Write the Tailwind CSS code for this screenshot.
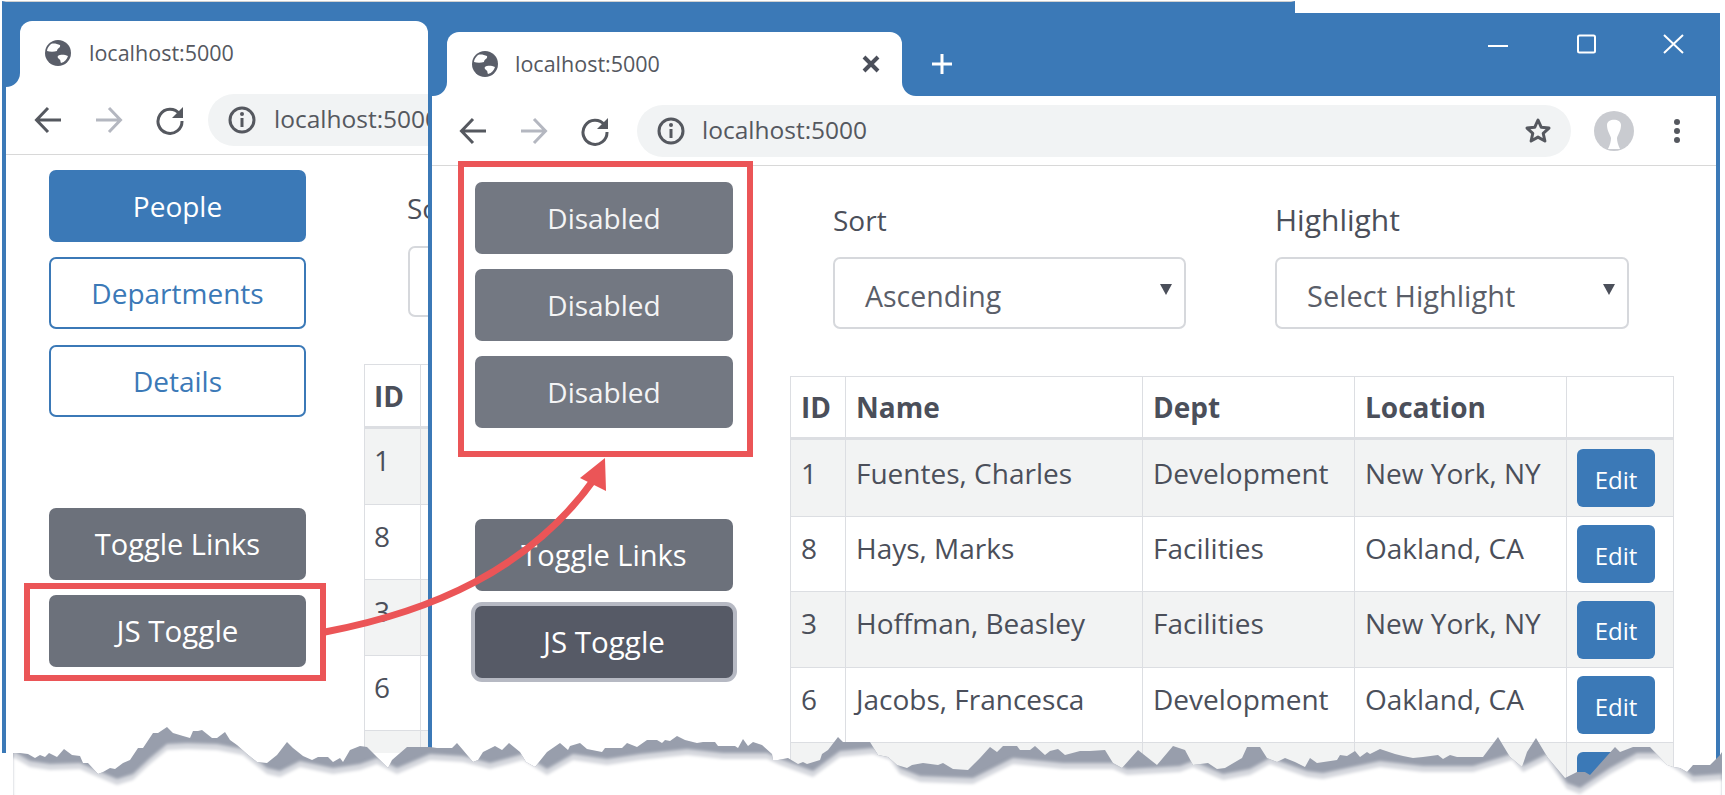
<!DOCTYPE html>
<html lang="en">
<head>
    <meta charset="UTF-8">
    <meta name="viewport" content="width=device-width, initial-scale=1.0">
    <title>localhost:5000</title>
    <script src="https://cdn.jsdelivr.net/npm/@tailwindcss/browser@4"></script>
</head>
<body class="bg-white">
<div class="relative w-[1725px] h-[795px] overflow-hidden bg-white font-['Open_Sans',sans-serif] text-[#4b4f5a]">

    <!-- Back window -->
    <div class="absolute left-[2px] top-[1px] w-[1293px] h-[752px] flex flex-col overflow-hidden border-t border-t-[#d0d0d0] border-x-4 border-x-[#3b79b7] bg-white">
        <div class="flex h-[85px] shrink-0 bg-white">
            <div class="w-[14px] bg-[#3b79b7] rounded-br-[14px]"></div>
            <div class="w-[408px] pt-[19px] bg-[#3b79b7]">
                <div class="h-[66px] bg-white rounded-t-[12px] flex items-center pl-[24px] pb-[2px] gap-[17px]">
                    <svg width="28" height="28" viewBox="0 0 28 28"><circle cx="14" cy="14" r="13" fill="#5a5e69"/><path d="M7 5c3-1 6 0 9 1 1 3-3 3-3 6-3 1-7 1-10 0 0-3 2-5 4-7zM14 17c3-2 7-1 10 0-1 3-3 6-7 7-1-2 0-3-2-4-1-1-2-2-1-3z" fill="#fff"/></svg>
                    <span class="text-[21.500px] text-[#55585f]">localhost:5000</span>
                </div>
            </div>
            <div class="flex-1 bg-[#3b79b7]"></div>
        </div>
        <div class="h-[68px] shrink-0 border-b border-[#d8d8d8] flex items-center pl-[28px] pb-[2px]">
            <svg width="28" height="28" viewBox="0 0 28 28" fill="none" stroke="#55585f" stroke-width="3"><path d="M27 14H3M14 2 2.500 14 14 26"/></svg>
            <svg class="ml-[33px]" width="28" height="28" viewBox="0 0 28 28" fill="none" stroke="#b4b7c0" stroke-width="3"><path d="M1 14h24M14 2l11.500 12L14 26"/></svg>
            <svg class="ml-[32px]" width="30" height="30" viewBox="0 0 30 30" fill="none"><path d="M24.500 9A12 12 0 1 0 27 16" stroke="#55585f" stroke-width="3"/><path d="M28 2v11H17z" fill="#55585f"/></svg>
            <div class="ml-[23px] flex-1 h-[52px] rounded-l-[26px] bg-[#f1f3f4] flex items-center pl-[20px] gap-[18px]">
                <svg width="28" height="28" viewBox="0 0 28 28" fill="none"><circle cx="14" cy="14" r="12" stroke="#55585f" stroke-width="3"/><path d="M14 12v9" stroke="#55585f" stroke-width="3"/><circle cx="14" cy="8" r="2" fill="#55585f"/></svg>
                <span class="text-[24.500px] text-[#55585f]">localhost:5000</span>
            </div>
        </div>
        <div class="flex flex-1 min-h-0">
            <div class="w-[358px] shrink-0 pl-[43px] pt-[15px] flex flex-col">
                <div class="w-[257px] h-[72px] rounded-[7px] bg-[#3b79b7] text-white text-[28px] flex items-center justify-center">People</div>
                <div class="w-[257px] h-[72px] mt-[15px] rounded-[7px] border-2 border-[#3b79b7] text-[#3b79b7] text-[28px] flex items-center justify-center">Departments</div>
                <div class="w-[257px] h-[72px] mt-[16px] rounded-[7px] border-2 border-[#3b79b7] text-[#3b79b7] text-[28px] flex items-center justify-center">Details</div>
                <div class="w-[257px] h-[72px] mt-[91px] rounded-[7px] bg-[#6c717b] text-white text-[29px] flex items-center justify-center">Toggle Links</div>
                <div class="w-[257px] h-[72px] mt-[15px] rounded-[7px] bg-[#6c717b] text-white text-[29.500px] flex items-center justify-center">JS Toggle</div>
            </div>
            <div class="flex-1">
                <div class="pl-[43px] pt-[32px] text-[28px] leading-[42px]">Sort</div>
                <div class="ml-[44px] mt-[17px] w-[353px] h-[71px] rounded-[7px] border-2 border-[#d6d8dc]"></div>
                <table class="mt-[47px] table-fixed border-collapse text-[28px] leading-[42px]">
                    <colgroup><col class="w-[56px]"><col class="w-[300px]"></colgroup>
                    <tr class="h-[63px]"><th class="border border-[#dcdee2] border-b-[3px] px-[9px] text-left align-middle">ID</th><th class="border border-[#dcdee2] border-b-[3px]"></th></tr>
                    <tr class="h-[77px] bg-[#f2f3f3]"><td class="border border-[#dcdee2] px-[9px] pt-[10px] align-top">1</td><td class="border border-[#dcdee2]"></td></tr>
                    <tr class="h-[75px]"><td class="border border-[#dcdee2] px-[9px] pt-[10px] align-top">8</td><td class="border border-[#dcdee2]"></td></tr>
                    <tr class="h-[76px] bg-[#f2f3f3]"><td class="border border-[#dcdee2] px-[9px] pt-[10px] align-top">3</td><td class="border border-[#dcdee2]"></td></tr>
                    <tr class="h-[75px]"><td class="border border-[#dcdee2] px-[9px] pt-[10px] align-top">6</td><td class="border border-[#dcdee2]"></td></tr>
                    <tr class="h-[75px] bg-[#f2f3f3]"><td class="border border-[#dcdee2] px-[9px] pt-[10px] align-top">2</td><td class="border border-[#dcdee2]"></td></tr>
                </table>
            </div>
        </div>
    </div>

    <!-- Front window -->
    <div class="absolute left-[428px] top-[13px] w-[1292px] h-[782px] flex flex-col overflow-hidden border-x-4 border-x-[#3b79b7] bg-white">
        <div class="flex h-[83px] shrink-0 bg-white">
            <div class="w-[15px] bg-[#3b79b7] rounded-br-[14px]"></div>
            <div class="w-[455px] pt-[19px] bg-[#3b79b7]">
                <div class="h-[64px] bg-white rounded-t-[12px] flex items-center pl-[24px] pr-[22px] gap-[16px]">
                    <svg width="28" height="28" viewBox="0 0 28 28"><circle cx="14" cy="14" r="13" fill="#5a5e69"/><path d="M7 5c3-1 6 0 9 1 1 3-3 3-3 6-3 1-7 1-10 0 0-3 2-5 4-7zM14 17c3-2 7-1 10 0-1 3-3 6-7 7-1-2 0-3-2-4-1-1-2-2-1-3z" fill="#fff"/></svg>
                    <span class="text-[21.500px] flex-1 text-[#55585f]">localhost:5000</span>
                    <svg width="18" height="18" viewBox="0 0 18 18" stroke="#4b4f5a" stroke-width="4"><path d="M2 2l14 14M16 2 2 16"/></svg>
                </div>
            </div>
            <div class="flex-1 rounded-bl-[14px] bg-[#3b79b7] flex items-start text-white pl-[29px] pt-[40px]">
                <svg width="22" height="22" viewBox="0 0 22 22" stroke="#fff" stroke-width="3"><path d="M11 1v20M1 11h20"/></svg>
                <svg class="ml-[534px] mt-[-9px]" width="22" height="4" viewBox="0 0 22 4" stroke="#fff" stroke-width="2"><path d="M1 2h20"/></svg>
                <svg class="ml-[67px] mt-[-19px]" width="21" height="20" viewBox="0 0 21 20" fill="none" stroke="#fff" stroke-width="2"><rect x="2" y="1.500" width="17" height="17" rx="1.500"/></svg>
                <svg class="ml-[66px] mt-[-19px]" width="21" height="20" viewBox="0 0 21 20" fill="none" stroke="#fff" stroke-width="2"><path d="M1 1l19 18M20 1 1 19"/></svg>
            </div>
        </div>
        <div class="h-[70px] shrink-0 border-b border-[#d8d8d8] flex items-center pl-[27px]">
            <svg width="28" height="28" viewBox="0 0 28 28" fill="none" stroke="#55585f" stroke-width="3"><path d="M27 14H3M14 2 2.500 14 14 26"/></svg>
            <svg class="ml-[33px]" width="28" height="28" viewBox="0 0 28 28" fill="none" stroke="#b4b7c0" stroke-width="3"><path d="M1 14h24M14 2l11.500 12L14 26"/></svg>
            <svg class="ml-[32px]" width="30" height="30" viewBox="0 0 30 30" fill="none"><path d="M24.500 9A12 12 0 1 0 27 16" stroke="#55585f" stroke-width="3"/><path d="M28 2v11H17z" fill="#55585f"/></svg>
            <div class="ml-[27px] w-[934px] h-[52px] rounded-[26px] bg-[#f1f3f4] flex items-center pl-[20px] pr-[19px] gap-[17px]">
                <svg width="28" height="28" viewBox="0 0 28 28" fill="none"><circle cx="14" cy="14" r="12" stroke="#55585f" stroke-width="3"/><path d="M14 12v9" stroke="#55585f" stroke-width="3"/><circle cx="14" cy="8" r="2" fill="#55585f"/></svg>
                <span class="text-[24.500px] flex-1 text-[#55585f]">localhost:5000</span>
                <svg width="28" height="27" viewBox="0 0 28 27" fill="none" stroke="#55585f" stroke-width="3" stroke-linejoin="round"><path d="M14 3l3.300 7.300 7.700.8-5.800 5.200 1.700 7.700L14 20.100 7.100 24l1.700-7.700L3 11.100l7.700-.8z"/></svg>
            </div>
            <svg class="ml-[23px]" width="40" height="40" viewBox="0 0 40 40"><circle cx="20" cy="20" r="20" fill="#c9cbd0"/><path d="M13 14c0-7 14-7 14 0 0 6-3 9-4 13 0 3 1 7 3 11H14c2-4 3-8 3-11-1-4-4-7-4-13z" fill="#fff"/></svg>
            <svg class="ml-[39px]" width="8" height="26" viewBox="0 0 8 26" fill="#55585f"><circle cx="4" cy="4" r="3"/><circle cx="4" cy="13" r="3"/><circle cx="4" cy="22" r="3"/></svg>
        </div>
        <div class="flex flex-1 min-h-0">
            <div class="w-[358px] shrink-0 pl-[43px] pt-[16px] flex flex-col">
                <div class="w-[258px] h-[72px] rounded-[7px] bg-[#737882] text-[#f4f4f5] text-[28px] flex items-center justify-center">Disabled</div>
                <div class="w-[258px] h-[72px] mt-[15px] rounded-[7px] bg-[#737882] text-[#f4f4f5] text-[28px] flex items-center justify-center">Disabled</div>
                <div class="w-[258px] h-[72px] mt-[15px] rounded-[7px] bg-[#737882] text-[#f4f4f5] text-[28px] flex items-center justify-center">Disabled</div>
                <div class="w-[258px] h-[72px] mt-[91px] rounded-[7px] bg-[#6c717b] text-white text-[29px] flex items-center justify-center">Toggle Links</div>
                <div class="w-[258px] h-[72px] mt-[15px] rounded-[7px] bg-[#565a66] text-white text-[29.500px] flex items-center justify-center ring-4 ring-[#b6b9c3]">JS Toggle</div>
            </div>
            <div class="flex-1">
                <div class="flex pl-[43px] pt-[33px] gap-[89px]">
                    <div class="w-[353px]">
                        <div class="text-[28px] leading-[42px]">Sort</div>
                        <div class="mt-[16px] h-[72px] rounded-[7px] border-2 border-[#d6d8dc] flex items-center justify-between pl-[30px] pr-[12px] pt-[6px] text-[28.500px] text-[#5a5e69]">Ascending
                            <svg class="mt-[-14px]" width="12" height="11" viewBox="0 0 12 11" fill="#4b4f5a"><path d="M0 0h12L6 11z"/></svg>
                        </div>
                    </div>
                    <div class="w-[354px]">
                        <div class="text-[30px] leading-[42px]">Highlight</div>
                        <div class="mt-[16px] h-[72px] rounded-[7px] border-2 border-[#d6d8dc] flex items-center justify-between pl-[30px] pr-[12px] pt-[6px] text-[29px] text-[#5a5e69]">Select Highlight
                            <svg class="mt-[-14px]" width="12" height="11" viewBox="0 0 12 11" fill="#4b4f5a"><path d="M0 0h12L6 11z"/></svg>
                        </div>
                    </div>
                </div>
                <table class="mt-[47px] w-[883px] table-fixed border-collapse text-[28px] leading-[42px]">
                    <colgroup><col class="w-[55px]"><col class="w-[297px]"><col class="w-[212px]"><col class="w-[212px]"><col class="w-[107px]"></colgroup>
                    <tr class="h-[62px]">
                        <th class="border border-[#dcdee2] border-b-[3px] px-[10px] text-left">ID</th>
                        <th class="border border-[#dcdee2] border-b-[3px] px-[10px] text-left">Name</th>
                        <th class="border border-[#dcdee2] border-b-[3px] px-[10px] text-left">Dept</th>
                        <th class="border border-[#dcdee2] border-b-[3px] px-[10px] text-left">Location</th>
                        <th class="border border-[#dcdee2] border-b-[3px]"></th>
                    </tr>
                    <tr class="h-[78px] bg-[#f2f3f3]">
                        <td class="border border-[#dcdee2] px-[10px] pt-[12px] align-top">1</td>
                        <td class="border border-[#dcdee2] px-[10px] pt-[12px] align-top">Fuentes, Charles</td>
                        <td class="border border-[#dcdee2] px-[10px] pt-[12px] align-top">Development</td>
                        <td class="border border-[#dcdee2] px-[10px] pt-[12px] align-top">New York, NY</td>
                        <td class="border border-[#dcdee2] pl-[10px] align-middle"><div class="w-[78px] h-[58px] pt-[3px] rounded-[6px] bg-[#3b79b7] text-white text-[24px] flex items-center justify-center">Edit</div></td>
                    </tr>
                    <tr class="h-[75px]">
                        <td class="border border-[#dcdee2] px-[10px] pt-[10px] align-top">8</td>
                        <td class="border border-[#dcdee2] px-[10px] pt-[10px] align-top">Hays, Marks</td>
                        <td class="border border-[#dcdee2] px-[10px] pt-[10px] align-top">Facilities</td>
                        <td class="border border-[#dcdee2] px-[10px] pt-[10px] align-top">Oakland, CA</td>
                        <td class="border border-[#dcdee2] pl-[10px] align-middle"><div class="w-[78px] h-[58px] pt-[3px] rounded-[6px] bg-[#3b79b7] text-white text-[24px] flex items-center justify-center">Edit</div></td>
                    </tr>
                    <tr class="h-[76px] bg-[#f2f3f3]">
                        <td class="border border-[#dcdee2] px-[10px] pt-[10px] align-top">3</td>
                        <td class="border border-[#dcdee2] px-[10px] pt-[10px] align-top">Hoffman, Beasley</td>
                        <td class="border border-[#dcdee2] px-[10px] pt-[10px] align-top">Facilities</td>
                        <td class="border border-[#dcdee2] px-[10px] pt-[10px] align-top">New York, NY</td>
                        <td class="border border-[#dcdee2] pl-[10px] align-middle"><div class="w-[78px] h-[58px] pt-[3px] rounded-[6px] bg-[#3b79b7] text-white text-[24px] flex items-center justify-center">Edit</div></td>
                    </tr>
                    <tr class="h-[75px]">
                        <td class="border border-[#dcdee2] px-[10px] pt-[10px] align-top">6</td>
                        <td class="border border-[#dcdee2] px-[10px] pt-[10px] align-top">Jacobs, Francesca</td>
                        <td class="border border-[#dcdee2] px-[10px] pt-[10px] align-top">Development</td>
                        <td class="border border-[#dcdee2] px-[10px] pt-[10px] align-top">Oakland, CA</td>
                        <td class="border border-[#dcdee2] pl-[10px] align-middle"><div class="w-[78px] h-[58px] pt-[3px] rounded-[6px] bg-[#3b79b7] text-white text-[24px] flex items-center justify-center">Edit</div></td>
                    </tr>
                    <tr class="h-[75px] bg-[#f2f3f3]">
                        <td class="border border-[#dcdee2]"></td>
                        <td class="border border-[#dcdee2]"></td>
                        <td class="border border-[#dcdee2]"></td>
                        <td class="border border-[#dcdee2]"></td>
                        <td class="border border-[#dcdee2] pl-[10px] pt-[9px] align-top"><div class="w-[78px] h-[58px] rounded-[6px] bg-[#3b79b7]"></div></td>
                    </tr>
                </table>
            </div>
        </div>
    </div>

    <!-- Callouts -->
    <div class="absolute left-[458px] top-[161px] w-[295px] h-[296px] border-[6px] border-[#eb5557]"></div>
    <div class="absolute left-[24px] top-[583px] w-[302px] h-[98px] border-[6px] border-[#eb5557]"></div>
    <svg class="absolute inset-0" width="1725" height="795" viewBox="0 0 1725 795" fill="none">
        <path d="M325 632C430 612 530 570 595 478" stroke="#eb5557" stroke-width="7"/>
        <path d="M605 458 580 478 606 491z" fill="#eb5557"/>
    </svg>

    <!-- Torn page edge: jagged top, dark band, soft fade down to white -->
    <svg class="absolute inset-0" width="1725" height="795" viewBox="0 0 1725 795">
        <defs>
            <path id="tear" d="M13 753 20 753 28 754 35 758 40 755 45 757 49 753 57 757 64 749 72 755 80 756 83 763 88 763 98 774 103 772 110 768 115 769 123 763 130 760 138 748 143 748 153 733 158 733 167 727 173 733 183 736 190 738 193 731 198 731 202 730 212 738 217 738 225 732 230 740 237 745 247 754 257 762 267 763 277 755 287 742 293 748 303 756 312 760 318 757 328 757 333 762 340 758 343 762 350 750 360 746 367 747 375 755 388 768 392 760 407 747 415 747 430 747 437 748 452 748 457 743 463 750 473 762 478 760 483 752 495 746 502 750 509 743 520 752 526 762 535 767 547 752 560 743 568 750 570 746 580 743 587 749 602 752 605 748 622 748 627 743 637 747 647 740 657 740 662 743 665 740 670 741 677 736 685 740 697 743 703 742 715 742 718 746 735 746 738 748 743 739 748 746 753 742 762 745 772 754 773 760 778 760 788 758 798 764 803 762 807 764 820 760 822 754 828 750 838 737 843 742 857 742 870 742 878 755 888 757 897 765 907 768 912 765 923 763 938 765 943 763 953 769 968 770 980 758 990 747 997 752 1003 746 1017 746 1020 750 1030 750 1035 746 1045 755 1050 751 1058 749 1065 755 1080 751 1090 751 1105 750 1113 763 1122 768 1138 750 1157 765 1173 746 1185 750 1193 765 1208 763 1217 769 1225 768 1242 758 1247 747 1260 747 1267 758 1277 762 1285 758 1295 762 1305 767 1310 758 1317 763 1337 760 1340 755 1347 756 1355 751 1360 757 1367 752 1370 754 1380 749 1395 754 1403 756 1413 758 1423 757 1438 755 1443 759 1450 755 1457 757 1483 757 1498 737 1510 757 1522 767 1527 752 1536 738 1548 758 1565 778 1577 772 1585 772 1590 775 1615 747 1620 752 1633 747 1650 747 1667 765 1673 767 1680 768 1687 772 1693 765 1710 765 1720 755 1722 752 1722 795 13 795z"/>
            <path id="fade" d="M13 755 30 765 50 768 80 767 98 775 117 783 133 778 150 762 167 748 187 747 217 748 243 753 267 772 280 775 300 765 333 772 360 768 377 762 397 772 430 758 463 760 490 767 523 758 547 773 573 758 607 763 640 758 687 753 723 757 767 757 780 763 813 775 840 755 873 752 890 758 900 772 920 780 973 782 1013 762 1063 767 1113 767 1127 773 1180 770 1193 765 1223 778 1250 773 1270 762 1307 775 1323 777 1380 765 1423 770 1473 770 1512 758 1523 770 1547 758 1567 787 1580 792 1610 772 1637 757 1660 757 1680 770 1693 780 1722 778 1722 800 13 800z"/>
            <clipPath id="tearclip"><use href="#tear"/></clipPath>
            <filter id="soft" x="-5%" y="-50%" width="110%" height="200%"><feGaussianBlur stdDeviation="1.500"/></filter>
        </defs>
        <use href="#tear" fill="#989eac"/>
        <g clip-path="url(#tearclip)">
            <use href="#fade" y="-4" fill="#d6d8de" filter="url(#soft)"/>
            <use href="#fade" y="2" fill="#ffffff" filter="url(#soft)"/>
        </g>
    </svg>
</div>
</body>
</html>
